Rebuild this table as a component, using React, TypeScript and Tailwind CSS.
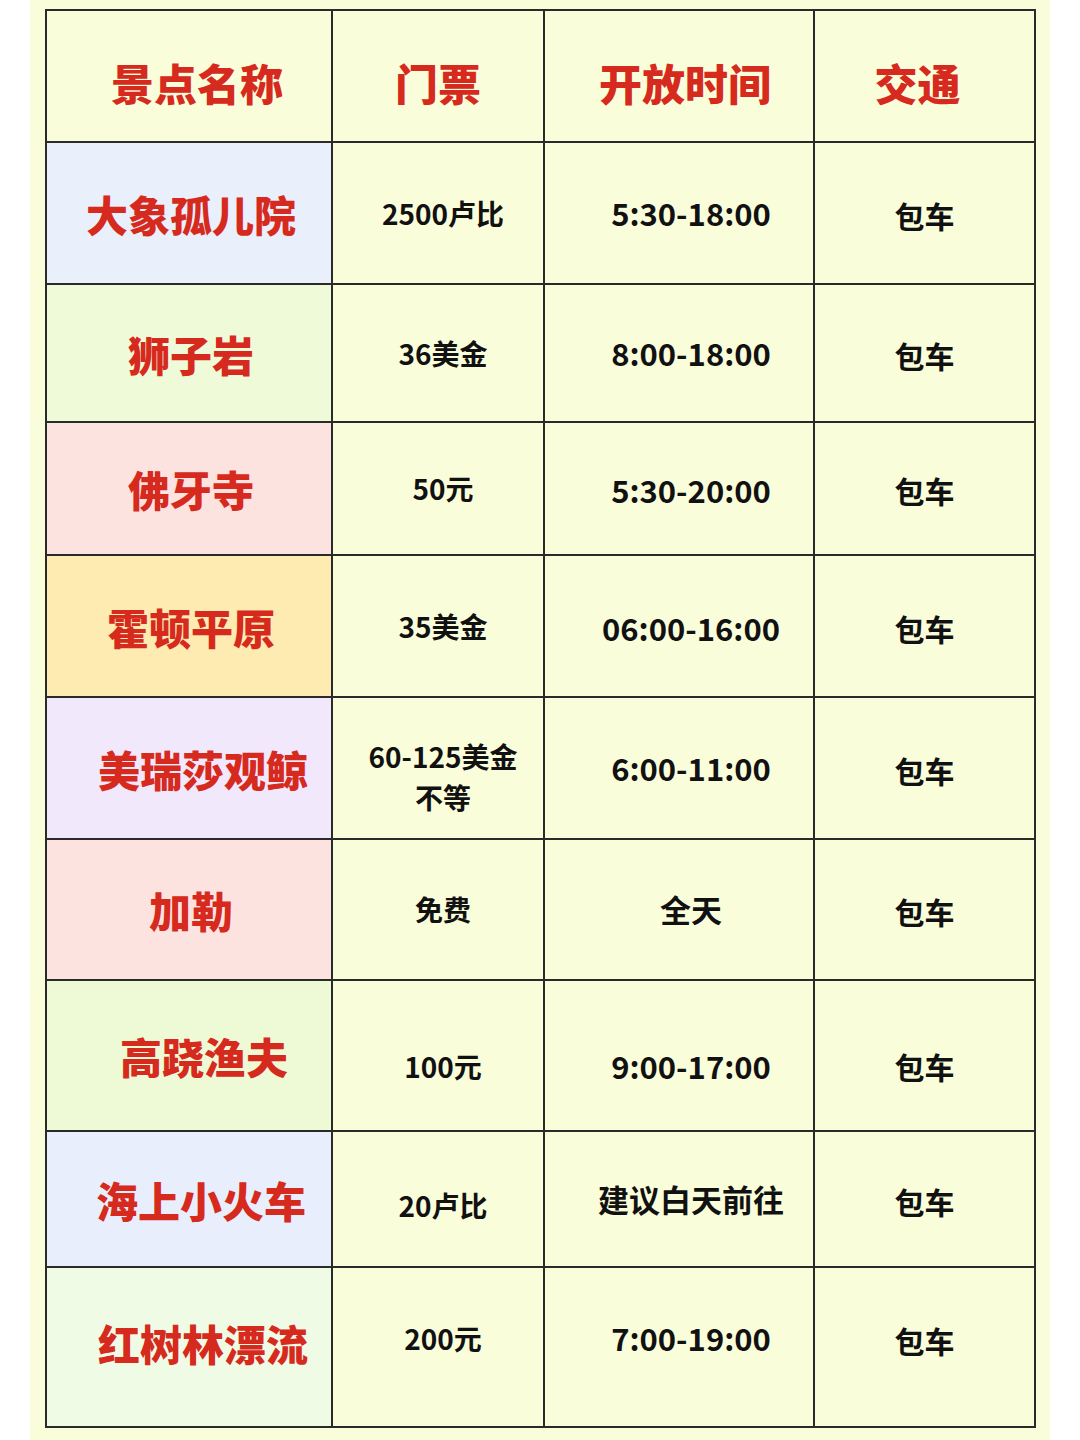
const rows = [
  { name: "大象孤儿院", bg: "bg-[#e9effb]", price: ["2500卢比"], time: "5:30-18:00", h: "h-[142px]", nx: "pl-[4px]", dy: "", px: "" },
  { name: "狮子岩", bg: "bg-[#eefad8]", price: ["36美金"], time: "8:00-18:00", h: "h-[138px]", nx: "pl-[4px]", dy: "", px: "" },
  { name: "佛牙寺", bg: "bg-[#fde3e0]", price: ["50元"], time: "5:30-20:00", h: "h-[133px]", nx: "pl-[4px]", dy: "pt-[4px]", px: "" },
  { name: "霍顿平原", bg: "bg-[#fdebb2]", price: ["35美金"], time: "06:00-16:00", h: "h-[142px]", nx: "pl-[4px]", dy: "pt-[4px]", px: "" },
  { name: "美瑞莎观鲸", bg: "bg-[#f2e8fb]", price: ["60-125美金", "不等"], time: "6:00-11:00", h: "h-[142px]", nx: "pl-[28px]", dy: "", px: "pt-[18px]" },
  { name: "加勒", bg: "bg-[#fde3e0]", price: ["免费"], time: "全天", h: "h-[141px]", nx: "pl-[4px]", dy: "", px: "" },
  { name: "高跷渔夫", bg: "bg-[#eefad6]", price: ["100元"], time: "9:00-17:00", h: "h-[151px]", nx: "pl-[30px]", dy: "pt-[22px]", px: "pt-[22px]" },
  { name: "海上小火车", bg: "bg-[#e8eefb]", price: ["20卢比"], time: "建议白天前往", h: "h-[136px]", nx: "pl-[24px]", dy: "", px: "pt-[12px]" },
  { name: "红树林漂流", bg: "bg-[#f0fbe6]", price: ["200元"], time: "7:00-19:00", h: "h-[160px]", nx: "pl-[28px] pb-[10px]", dy: "pb-[18px]", px: "pb-[18px]" },
];

const font = "font-['Noto_Sans_CJK_SC','Noto_Sans',sans-serif]";
const cell = "flex items-center justify-center border-r-2 border-b-2 border-[#2a2a2a] text-center";

export default function App() {
  return (
    <div className={`min-h-[1440px] w-[1080px] bg-white ${font}`}>
      <div className="ml-[30px] w-[1020px] min-h-[1440px] bg-[#fafdda] pt-[9px] pl-[15px]">
        <div className="grid w-[991px] grid-cols-[286px_212px_270px_221px] border-t-2 border-l-2 border-[#2a2a2a]">
          <div className={`${cell} h-[132px] pt-[12px] pl-[16px] text-[43px] font-black text-[#d62a1e]`}>景点名称</div>
          <div className={`${cell} h-[132px] pt-[12px] text-[43px] font-black text-[#d62a1e]`}>门票</div>
          <div className={`${cell} h-[132px] pt-[12px] pl-[12px] text-[43px] font-black text-[#d62a1e]`}>开放时间</div>
          <div className={`${cell} h-[132px] pt-[12px] pr-[14px] text-[43px] font-black text-[#d62a1e]`}>交通</div>
          {rows.map((r) => (
            <div key={r.name} className="contents">
              <div className={`${cell} ${r.h} ${r.bg} ${r.nx} text-[42px] font-black text-[#d62a1e]`}>
                {r.name}
              </div>
              <div className={`${cell} ${r.h} ${r.px} flex-col pl-[10px] text-[28px] leading-[41px] font-bold text-[#111]`}>
                {r.price.map((p) => (
                  <span key={p}>{p}</span>
                ))}
              </div>
              <div className={`${cell} ${r.h} ${r.dy} pl-[24px] text-[31px] font-bold text-[#111]`}>{r.time}</div>
              <div className={`${cell} ${r.h} ${r.dy} pt-[4px] text-[30px] font-bold text-[#111]`}>包车</div>
            </div>
          ))}
        </div>
      </div>
    </div>
  );
}
